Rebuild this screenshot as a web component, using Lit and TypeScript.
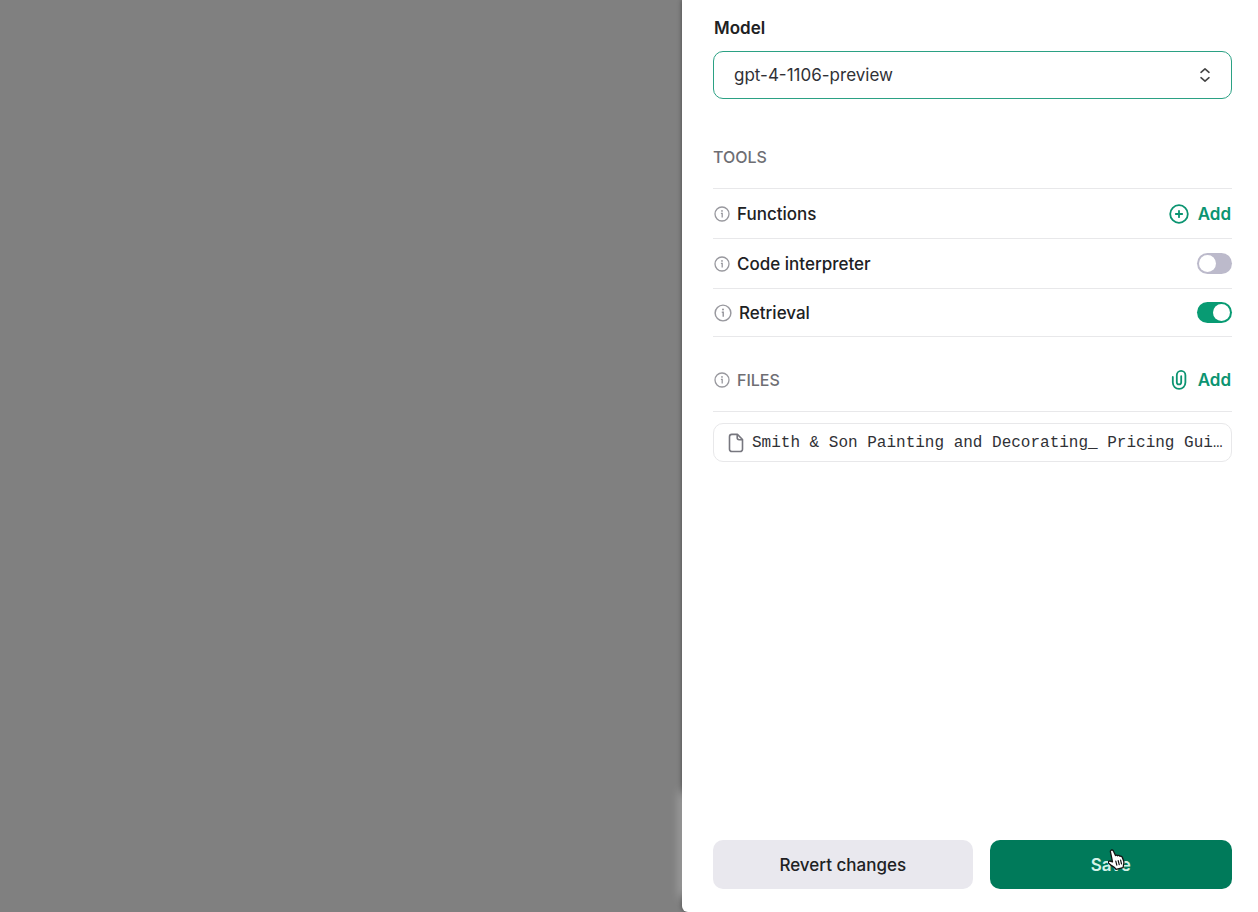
import { LitElement, html, css, svg } from "lit";
import { customElement, property, state } from "lit/decorators.js";

const infoIcon = (size: number) => html`<svg class="info" width=${size} height=${size} viewBox="0 0 16 16" aria-hidden="true">
  ${svg`<circle cx="8" cy="8" r="7" fill="none" stroke="currentColor" stroke-width="1.3"/>
  <path d="M6.9 7.3H8.2V11.4" fill="none" stroke="currentColor" stroke-width="1.3"/>
  <circle cx="8" cy="4.9" r=".9" fill="currentColor"/>`}
</svg>`;

const plusIcon = html`<svg width="20" height="20" viewBox="0 0 20 20" fill="none" stroke="currentColor" stroke-width="1.8" stroke-linecap="round" aria-hidden="true">
  <circle cx="10" cy="10" r="8.8" /><path d="M10 6.8v6.4M6.8 10h6.4" />
</svg>`;

const clipIcon = html`<svg width="20" height="20" viewBox="0 0 20 20" fill="none" stroke="currentColor" stroke-width="1.8" stroke-linecap="round" stroke-linejoin="round" aria-hidden="true">
  <path d="M3.800 7V12.600a6.300 6.300 0 0 0 12.600 0V5.200a4.300 4.300 0 0 0-8.600 0V12.200a2.200 2.200 0 0 0 4.400 0V6.200" />
</svg>`;

const fileIcon = html`<svg width="16" height="20" viewBox="0 0 16 20" fill="none" stroke="currentColor" stroke-width="1.6" stroke-linejoin="round" aria-hidden="true">
  <path d="M9.4 1.4H3.8A2.3 2.3 0 0 0 1.5 3.7V16.2a2.3 2.3 0 0 0 2.3 2.3h8.4a2.3 2.3 0 0 0 2.3-2.3V6.5z" />
  <path d="M9.2 1.6V4.8a1.9 1.9 0 0 0 1.9 1.9h3.2" />
</svg>`;

const handIcon = html`<svg class="hand" width="18" height="22" viewBox="0 0 18 22" aria-hidden="true">
  <path d="M3.200 1.200c1-.5 1.900 0 2.300 1l2 4.400c.6-.7 1.700-.6 2.200.2.7-.6 1.800-.4 2.200.5 1-.5 1.900 0 2.300 1l1.400 3.500c.5 1.600.3 2.900-.1 4.200l-.4 2.600-7 1.800c-1-1.700-2.900-2.900-4.800-4l-2.600-2.200c-.7-.8-.3-1.800.5-2.100.9-.3 2 .1 3.300.8L2.500 3.200c-.3-.9 0-1.600.7-2z" fill="#fff" stroke="#111" stroke-width="1.300" stroke-linejoin="round" />
  <path d="M7.800 12.200l1 4M10.200 11.700l1 4M12.600 11.200l.9 3.700" fill="none" stroke="#111" stroke-width="1.200" stroke-linecap="round" />
</svg>`;

@customElement("tool-switch")
class ToolSwitch extends LitElement {
  @property() label = "";
  @property({ type: Boolean }) on = false;

  static styles = css`
    :host { display: flex; }
    .switch {
      appearance: none;
      box-sizing: border-box;
      width: 35px;
      height: 21px;
      margin: 0;
      padding: 2px;
      display: flex;
      border-radius: 11px;
      background: #bcbacb;
      cursor: pointer;
    }
    .switch::before {
      content: "";
      width: 17px;
      height: 17px;
      border-radius: 50%;
      background: #fff;
    }
    .switch:checked { background: #089b73; justify-content: flex-end; }
  `;

  render() {
    return html`<input class="switch" type="checkbox" role="switch" aria-label=${this.label}
      .checked=${this.on} @change=${(e: Event) => (this.on = (e.target as HTMLInputElement).checked)} />`;
  }
}

@customElement("app-root")
class AppRoot extends LitElement {
  @state() private model = "gpt-4-1106-preview";

  static styles = css`
    :host {
      display: block;
      color: #202123;
      font: 500 17px/24px Inter, "Liberation Sans", sans-serif;
    }
    .layout {
      display: grid;
      grid-template-columns: 682fr 576fr;
      min-height: 100vh;
      background: #808080;
    }
    .panel {
      grid-column: 2;
      box-sizing: border-box;
      display: flex;
      flex-direction: column;
      min-width: 0;
      padding: 16px 0 0;
      background: #fff;
      border-radius: 0 0 0 6px;
      box-shadow: 0 0 5px rgba(0, 0, 0, 0.45);
    }
    .content { display: flex; flex-direction: column; padding: 0 26px 0 31px; }
    .model-label { padding-left: 1px; font-weight: 600; }
    .select-wrap { display: grid; align-items: center; margin-top: 11px; }
    .select-wrap > * { grid-area: 1 / 1; }
    .select {
      appearance: none;
      box-sizing: border-box;
      width: 100%;
      height: 48px;
      padding: 0 44px 0 20px;
      border: 1px solid #2ba184;
      border-radius: 10px;
      background: #fff;
      color: #303136;
      font: inherit;
      font-weight: 400;
      outline: none;
    }
    .chevrons { justify-self: end; margin-right: 21px; pointer-events: none; color: #444; }
    .heading { margin: 0; color: #6e6e73; font-size: 16px; font-weight: 500; line-height: 24px; }
    .tools { margin: 46px 0 19px; }
    .rows { margin: 0; padding: 0; list-style: none; border-top: 1px solid #e8e8ea; }
    .row {
      box-sizing: border-box;
      display: flex;
      align-items: center;
      justify-content: space-between;
      height: 50px;
      border-bottom: 1px solid #e8e8ea;
    }
    .row:last-child { height: 48px; }
    .name { display: flex; align-items: center; gap: 7px; padding-left: 1px; }
    .info { flex: none; color: #98989e; }
    .add {
      display: flex;
      align-items: center;
      gap: 9px;
      padding: 0 1px 0 0;
      border: 0;
      background: none;
      color: #0b9471;
      font: inherit;
      font-weight: 600;
      cursor: pointer;
    }
    .files {
      display: flex;
      align-items: center;
      justify-content: space-between;
      padding: 31px 0 19px;
      border-bottom: 1px solid #e8e8ea;
    }
    .file {
      box-sizing: border-box;
      display: flex;
      align-items: center;
      gap: 8px;
      height: 39px;
      margin-top: 11px;
      padding: 0 8px 0 14px;
      border: 1px solid #e8e8ea;
      border-radius: 10px;
      color: #303136;
      font: 400 16px/24px "Liberation Mono", monospace;
      text-decoration: none;
    }
    .file svg { flex: none; color: #77777f; }
    .file-name { min-width: 0; overflow: hidden; white-space: nowrap; text-overflow: ellipsis; }
    .footer {
      display: grid;
      grid-template-columns: 259fr 242fr;
      gap: 17px;
      margin-top: auto;
      margin-bottom: 15px;
      padding: 48px 26px 8px 31px;
      background: #fff;
      box-shadow: 0 0 10px rgba(255, 255, 255, 0.6);
    }
    .button {
      position: relative;
      height: 49px;
      padding: 0;
      border: 0;
      border-radius: 10px;
      background: #e9e8ee;
      color: #202123;
      font: inherit;
      cursor: pointer;
    }
    .save { background: #007a5a; color: #d5f2e8; font-weight: 600; }
    .hand { position: absolute; left: 50%; top: 9px; margin-left: -3px; }
  `;

  render() {
    return html`
      <main class="layout">
        <section class="panel">
          <div class="content">
            <label class="model-label" for="model">Model</label>
            <div class="select-wrap">
              <select class="select" id="model" .value=${this.model}
                @change=${(e: Event) => (this.model = (e.target as HTMLSelectElement).value)}>
                <option>gpt-4-1106-preview</option>
              </select>
              <svg class="chevrons" width="12" height="16" viewBox="0 0 12 16" fill="none" stroke="currentColor" stroke-width="1.6" stroke-linecap="round" stroke-linejoin="round" aria-hidden="true">
                <path d="M2 5.300L6 1.800L10 5.300M2 10.700L6 14.200L10 10.700" />
              </svg>
            </div>
            <h2 class="heading tools">TOOLS</h2>
            <ul class="rows">
              <li class="row"><span class="name">${infoIcon(16)}Functions</span><button class="add">${plusIcon}Add</button></li>
              <li class="row"><span class="name">${infoIcon(16)}Code interpreter</span><tool-switch label="Code interpreter"></tool-switch></li>
              <li class="row"><span class="name">${infoIcon(18)}Retrieval</span><tool-switch label="Retrieval" on></tool-switch></li>
            </ul>
            <div class="files">
              <h2 class="heading name">${infoIcon(16)}FILES</h2>
              <button class="add">${clipIcon}Add</button>
            </div>
            <a class="file" href="#file">${fileIcon}<span class="file-name">Smith &amp; Son Painting and Decorating_ Pricing Guide.pdf</span></a>
          </div>
          <div class="footer">
            <button class="button">Revert changes</button>
            <button class="button save">Save${handIcon}</button>
          </div>
        </section>
      </main>
    `;
  }
}
